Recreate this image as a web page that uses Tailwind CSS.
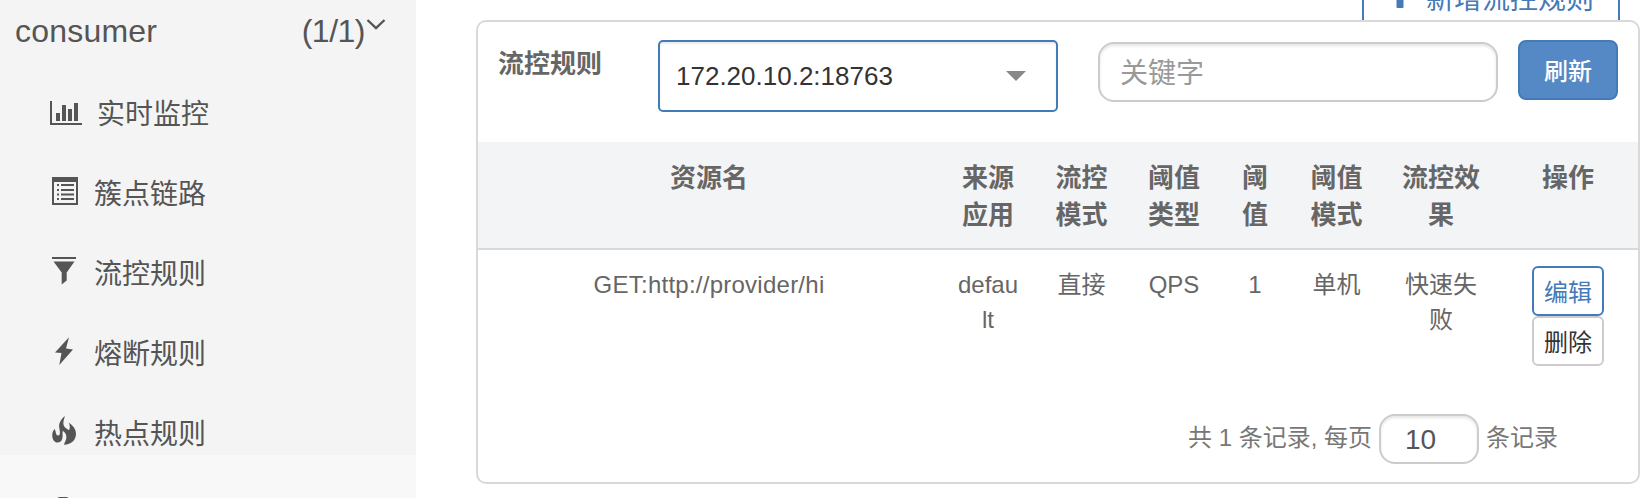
<!DOCTYPE html>
<html lang="zh-CN">
<head>
<meta charset="utf-8">
<title>流控规则</title>
<script src="https://cdn.jsdelivr.net/npm/@tailwindcss/browser@4"></script>
</head>
<body class="bg-white font-['Liberation_Sans','Noto_Sans_CJK_SC',sans-serif] overflow-hidden">
<div class="flex h-[498px] w-[1652px] overflow-hidden">
  <aside class="w-[416px] h-full shrink-0 bg-[#f8f8f8] text-[#555] overflow-hidden">
    <div class="h-[455px] bg-[#f4f4f4]">
      <div class="flex h-[72px] pl-[15px] pr-[30px] text-[32px] leading-[62px]">
        <span class="tracking-[0.2px]">consumer</span>
        <span class="ml-auto tracking-[-0.5px]">(1/1)</span>
        <svg class="mt-[18px] ml-[1px] w-5 h-3" viewBox="0 0 20 12" fill="none" stroke="#555" stroke-width="2.400"><path d="M1.500 2 10 10 18.500 2"/></svg>
      </div>
      <nav class="text-[28px] leading-[85px]">
        <a class="flex h-20 pl-[50px]"><svg class="w-8 h-6 mt-[29px] mr-[15px]" viewBox="0 0 32 24" fill="#555"><path d="M0 0h2v22h30v2H0zM6 12h4v8H6zM12 4h4v16h-4zM18 8h4v12h-4zM24 2h4v18h-4z"/></svg>实时监控</a>
        <a class="flex h-20 pl-[52px]"><svg class="w-[26px] h-7 mt-[25px] mr-4" viewBox="0 0 26 28" fill="#555"><path fill-rule="evenodd" d="M0 0h26v28H0zM2 5v21h22V5z"/><path d="M5 7h2v2H5zM9 7h13v2H9zM5 12h2v2H5zM9 12h13v2H9zM5 16.500h2v2H5zM9 16.500h13v2H9zM5 21h2v2H5zM9 21h13v2H9z"/></svg>簇点链路</a>
        <a class="flex h-20 pl-[52px]"><svg class="w-6 h-7 mt-[25px] mr-[18px]" viewBox="0 0 24 28" fill="#555"><path d="M0 0h24v2H0zM1.500 4.500h21L14.700 15.500V23.500L9.700 27.500V15.500z"/></svg>流控规则</a>
        <a class="flex h-20 pl-[52px]"><svg class="w-6 h-7 mt-[25px] mr-[18px]" viewBox="0 0 24 28" fill="#555"><path d="M17 .3 3 15.500 9.500 16 7.300 28 21 12.500 14 11.500z"/></svg>熔断规则</a>
        <a class="flex h-20 pl-[52px]"><svg class="w-6 h-[29px] mt-[24px] mr-[18px]" viewBox="0 0 24 29" fill="#555"><path d="M13 0C8.500 3.500 6.500 7.500 7.300 12 7.800 15 8.300 17 7.600 18.500 6.800 20 5 19.800 4.300 18.300 3.600 16.800 3.800 15 2.600 13 .8 15 0 17.300.3 20.500.7 24 2.800 26.700 5.800 26.500 9 26.300 10.500 23.800 10.600 20.500 10.700 18.500 10.300 17 10.800 14.800 13.300 16.500 14.600 19 14.300 22 14.100 24.500 12.500 26.500 12 28.800 19.500 28.500 24 24 24 17.800 24 12.500 20.500 9.500 16.800 6.500 18 9.500 18.200 12 17 14.300 15.500 13 12.500 12 11.600 9 10.900 6.500 11.800 3.500 13 0z"/></svg>热点规则</a>
      </nav>
    </div>
    <div class="pl-[56px] pt-[41px]"><svg class="w-[14px] h-7" viewBox="0 0 14 28" fill="none" stroke="#555" stroke-width="3"><path d="M2.500 14V4q0-1.500 1.500-1.500h6q1.500 0 1.500 1.500v10"/></svg></div>
  </aside>

  <main class="flex-1 pl-[60px] pr-3 overflow-hidden">
    <div class="flex justify-end h-5 pr-5 overflow-hidden">
      <button class="flex items-start -mt-[38px] h-[66px] w-[258px] shrink-0 border-2 border-[#447ab7] rounded-lg bg-white text-[#447ab7] text-[28px] leading-[71px] pl-[24px] whitespace-nowrap">
        <svg class="w-6 h-6 mt-[20px] mr-[14px] shrink-0" viewBox="0 0 24 24" fill="#447ab7"><path d="M9.500 0h5q1 0 1 1v7.500H23q1 0 1 1v5q0 1-1 1h-7.500V23q0 1-1 1h-5q-1 0-1-1v-7.500H1q-1 0-1-1v-5q0-1 1-1h7.500V1q0-1 1-1z"/></svg>新增流控规则
      </button>
    </div>
    <section class="w-[1164px] h-[464px] border-2 border-[#d9d9d9] rounded-[10px] bg-white overflow-hidden text-[#666]">
      <div class="flex h-[120px] pl-5">
        <h2 class="w-[160px] mt-6 text-[26px] leading-[37px] font-bold">流控规则</h2>
        <div class="flex items-center justify-between mt-[18px] w-[400px] h-[72px] border-2 border-[#447ab7] rounded-[5px] pl-4 pr-[30px] text-[26px] leading-[68px] text-[#333] shadow-[inset_0_2px_2px_rgba(0,0,0,0.075)]">
          <span>172.20.10.2:18763</span>
          <svg class="w-5 h-[10px]" viewBox="0 0 20 10" fill="#888"><path d="M0 0h20L10 10z"/></svg>
        </div>
        <input placeholder="关键字" class="ml-10 mt-5 w-[400px] h-[60px] border-2 border-[#ccc] rounded-2xl px-5 pt-1 text-[28px] placeholder:text-[#999] shadow-[inset_0_2px_3px_rgba(0,0,0,0.1)]">
        <button class="ml-5 mt-[18px] w-[100px] h-[60px] border-2 border-[#447ab7] rounded-lg bg-[#5489c5] pt-1 text-white text-[24px] font-medium leading-[52px]">刷新</button>
      </div>
      <table class="table-fixed w-[1160px] text-center border-separate border-spacing-0">
        <colgroup><col class="w-[462px]"><col class="w-[96px]"><col class="w-[91px]"><col class="w-[94px]"><col class="w-[68px]"><col class="w-[95px]"><col class="w-[114px]"><col class="w-[140px]"></colgroup>
        <thead class="bg-[#f3f4f6] text-[26px] leading-[37px]">
          <tr class="h-[108px] align-top">
            <th class="pt-[18px] border-b-2 border-[#d9d9d9]">资源名</th>
            <th class="pt-[18px] border-b-2 border-[#d9d9d9]">来源<br>应用</th>
            <th class="pt-[18px] border-b-2 border-[#d9d9d9]">流控<br>模式</th>
            <th class="pt-[18px] border-b-2 border-[#d9d9d9]">阈值<br>类型</th>
            <th class="pt-[18px] border-b-2 border-[#d9d9d9]">阈<br>值</th>
            <th class="pt-[18px] border-b-2 border-[#d9d9d9]">阈值<br>模式</th>
            <th class="pt-[18px] border-b-2 border-[#d9d9d9]">流控效<br>果</th>
            <th class="pt-[18px] border-b-2 border-[#d9d9d9]">操作</th>
          </tr>
        </thead>
        <tbody class="text-[24px] leading-[35px]">
          <tr class="h-[132px] align-top">
            <td class="pt-[17px] tracking-[0.25px]">GET:http://provider/hi</td>
            <td class="pt-[17px]">defau<br>lt</td>
            <td class="pt-[17px]">直接</td>
            <td class="pt-[17px]">QPS</td>
            <td class="pt-[17px]">1</td>
            <td class="pt-[17px]">单机</td>
            <td class="pt-[17px]">快速失<br>败</td>
            <td class="pt-4">
              <div class="flex flex-col items-center">
                <button class="w-[72px] h-[50px] border-2 border-[#447ab7] rounded-md text-[#447ab7] pt-[3px] leading-[43px]">编辑</button>
                <button class="w-[72px] h-[50px] border-2 border-[#ccc] rounded-md text-[#333] pt-[3px] leading-[43px]">删除</button>
              </div>
            </td>
          </tr>
        </tbody>
      </table>
      <div class="flex justify-end h-[50px] mt-8 pr-[80px] text-[24px] leading-[48px] text-[#777]">
        <span>共 1 条记录, 每页</span>
        <input value="10" class="ml-[7px] mr-[7px] w-[100px] h-[50px] border-2 border-[#ccc] rounded-2xl pl-6 pt-0.5 text-[28px] text-[#555] shadow-[inset_0_2px_3px_rgba(0,0,0,0.1)]">
        <span>条记录</span>
      </div>
    </section>
  </main>
</div>
</body>
</html>
